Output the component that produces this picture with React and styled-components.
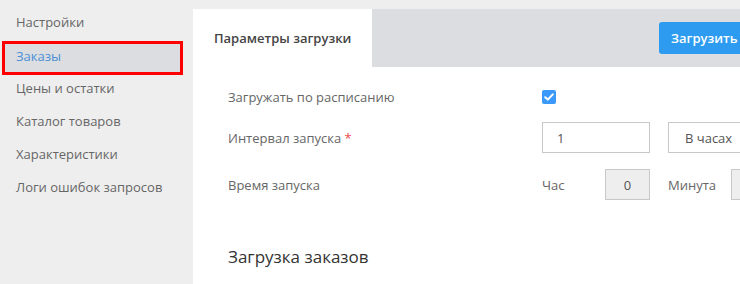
import React from "react";
import styled, { createGlobalStyle } from "styled-components";

const Global = createGlobalStyle`
    html, body {
        margin: 0;
        padding: 0;
        overflow: hidden;
        background: #eeeeee;
        font-family: "Open Sans", "Noto Sans", sans-serif;
        font-size: 13px;
    }
    * { box-sizing: border-box; }
`;

const Layout = styled.div`
    display: flex;
    width: 1100px;
    height: 284px;
`;

const Sidebar = styled.nav`
    width: 193px;
    flex-shrink: 0;
    padding-top: 6px;
    display: flex;
    flex-direction: column;
`;

const NavItem = styled.div`
    height: ${p => (p.active ? "34px" : "33px")};
    line-height: ${p => (p.active ? "24px" : "33px")};
    padding-left: ${p => (p.active ? "11px" : "16px")};
    margin: ${p => (p.active ? "2px 10px -3px 2px" : "0")};
    color: ${p => (p.active ? "#4a8fd6" : "#666")};
    background: ${p => (p.active ? "#dcdde0" : "transparent")};
    border: ${p => (p.active ? "3px solid #ff0000" : "none")};
    white-space: nowrap;
`;

const Main = styled.main`
    flex: 1;
    margin-top: 9px;
    background: #fff;
    display: flex;
    flex-direction: column;
`;

const TabBar = styled.div`
    height: 58px;
    display: flex;
    background: #dcdde0;
`;

const Tab = styled.div`
    width: 179px;
    background: #fff;
    padding-left: 21px;
    line-height: 58px;
    color: #444;
    font-weight: 600;
`;

const TabFill = styled.div`
    flex: 1;
    display: flex;
    align-items: center;
    padding-left: 287px;
`;

const PrimaryButton = styled.button`
    height: 32px;
    padding: 0 12px;
    border: none;
    border-radius: 3px;
    background: #2d9bef;
    color: #fff;
    font-family: inherit;
    font-size: 13px;
    font-weight: 600;
    white-space: nowrap;
`;

const Content = styled.div`
    padding: 20px 0 0 35px;
    display: flex;
    flex-direction: column;
`;

const Row = styled.div`
    display: flex;
    align-items: center;
    height: ${p => p.h}px;
    margin-top: ${p => p.mt || 0}px;
`;

const Label = styled.div`
    width: 314px;
    color: #666;
    flex-shrink: 0;
`;

const Req = styled.span`
    color: #e94b4b;
`;

const Checkbox = styled.span`
    width: 14px;
    height: 14px;
    border-radius: 2px;
    background: #3b99fc;
    display: flex;
    align-items: center;
    justify-content: center;
`;

const Field = styled.div`
    height: 31px;
    width: ${p => p.w}px;
    border: 1px solid #c8c8c8;
    background: ${p => (p.muted ? "#eeeeee" : "#fff")};
    color: #555;
    padding-left: ${p => p.pl || 0}px;
    display: flex;
    align-items: center;
    justify-content: ${p => (p.center ? "center" : "flex-start")};
    flex-shrink: 0;
    margin-right: ${p => p.mr || 0}px;
`;

const Small = styled.span`
    color: #666;
    width: ${p => p.w}px;
    flex-shrink: 0;
`;

const Heading = styled.h2`
    margin: 45px 0 0;
    font-size: 17px;
    font-weight: 400;
    color: #333;
    line-height: 24px;
`;

const nav = [
    "Настройки",
    "Заказы",
    "Цены и остатки",
    "Каталог товаров",
    "Характеристики",
    "Логи ошибок запросов"
];

export default () => {
    return (
        <>
            <Global />
            <Layout>
                <Sidebar>
                    {nav.map(n => (
                        <NavItem key={n} active={n === "Заказы"}>{n}</NavItem>
                    ))}
                </Sidebar>
                <Main>
                    <TabBar>
                        <Tab>Параметры загрузки</Tab>
                        <TabFill>
                            <PrimaryButton>Загрузить заказы</PrimaryButton>
                        </TabFill>
                    </TabBar>
                    <Content>
                        <Row h={20}>
                            <Label>Загружать по расписанию</Label>
                            <Checkbox>
                                <svg width="10" height="8" viewBox="0 0 10 8">
                                    <path d="M1.2 4.2 L3.8 6.6 L8.8 1.4" fill="none" stroke="#fff" strokeWidth="2" strokeLinecap="round" strokeLinejoin="round" />
                                </svg>
                            </Checkbox>
                        </Row>
                        <Row h={31} mt={15}>
                            <Label>Интервал запуска <Req>*</Req></Label>
                            <Field w={108} pl={14} mr={18}>1</Field>
                            <Field w={150} pl={16}>В часах</Field>
                        </Row>
                        <Row h={31} mt={16}>
                            <Label>Время запуска</Label>
                            <Small w={63}>Час</Small>
                            <Field w={45} muted center mr={18}>0</Field>
                            <Small w={63}>Минута</Small>
                            <Field w={45} muted center>0</Field>
                        </Row>
                        <Heading>Загрузка заказов</Heading>
                    </Content>
                </Main>
            </Layout>
        </>
    );
};
